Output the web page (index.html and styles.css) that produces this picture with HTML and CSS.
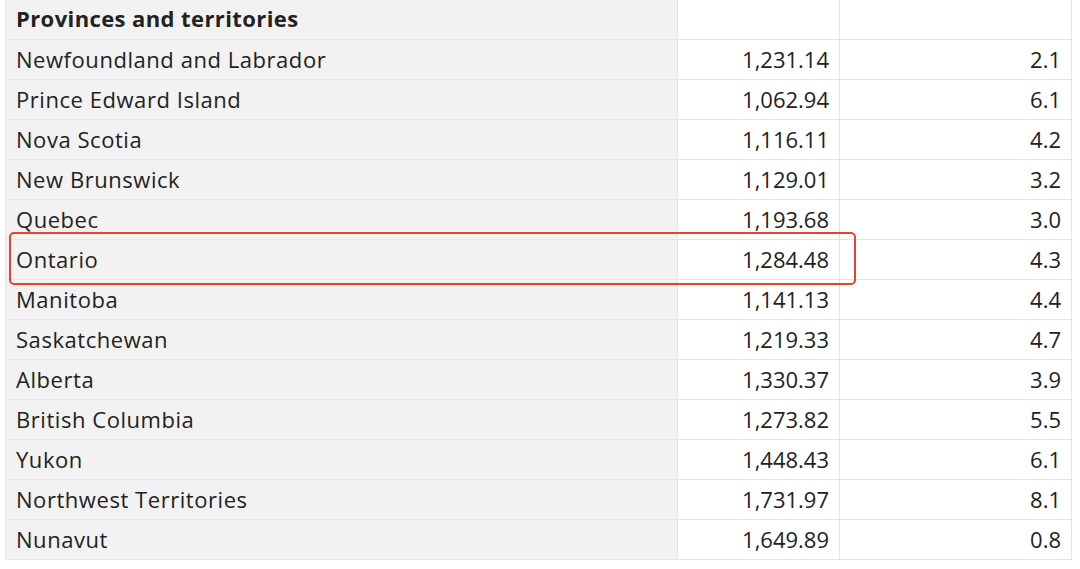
FILE: index.html
```html
<!DOCTYPE html>
<html>
<head>
<meta charset="utf-8">
<link rel="stylesheet" href="styles.css">
</head>
<body>
<div class="wrap">
<table class="data">
  <colgroup><col class="c1"><col class="c2"><col class="c3"></colgroup>
  <tr class="head"><th class="name">Provinces and territories</th><td></td><td></td></tr>
  <tr><th class="name">Newfoundland and Labrador</th><td>1,231.14</td><td>2.1</td></tr>
  <tr><th class="name">Prince Edward Island</th><td>1,062.94</td><td>6.1</td></tr>
  <tr><th class="name">Nova Scotia</th><td>1,116.11</td><td>4.2</td></tr>
  <tr><th class="name">New Brunswick</th><td>1,129.01</td><td>3.2</td></tr>
  <tr><th class="name">Quebec</th><td>1,193.68</td><td>3.0</td></tr>
  <tr><th class="name">Ontario</th><td>1,284.48</td><td>4.3</td></tr>
  <tr><th class="name">Manitoba</th><td>1,141.13</td><td>4.4</td></tr>
  <tr><th class="name">Saskatchewan</th><td>1,219.33</td><td>4.7</td></tr>
  <tr><th class="name">Alberta</th><td>1,330.37</td><td>3.9</td></tr>
  <tr><th class="name">British Columbia</th><td>1,273.82</td><td>5.5</td></tr>
  <tr><th class="name">Yukon</th><td>1,448.43</td><td>6.1</td></tr>
  <tr><th class="name">Northwest Territories</th><td>1,731.97</td><td>8.1</td></tr>
  <tr><th class="name">Nunavut</th><td>1,649.89</td><td>0.8</td></tr>
</table>
<div class="highlight"></div>
</div>
</body>
</html>
```
FILE: styles.css
```css
html, body {
  margin: 0;
  padding: 0;
  background: #ffffff;
}
body {
  font-family: "Open Sans", "Noto Sans", sans-serif;
  color: #222222;
}
.wrap {
  position: relative;
  padding-left: 5px;
  width: 1066px;
}
.data {
  border-collapse: collapse;
  table-layout: fixed;
  width: 1066px;
  font-size: 22px;
}
.c1 { width: 672px; }
.c2 { width: 162px; }
.c3 { width: 232px; }
.data th,
.data td {
  border: 1px solid #e4e4e4;
  height: 40px;
  padding: 0 10px;
  box-sizing: border-box;
  line-height: 26px;
  vertical-align: middle;
}
.data tr.head th,
.data tr.head td {
  border-top: none;
  height: 39px;
  padding-bottom: 3px;
}
.data th.name {
  background: #f2f2f2;
  text-align: left;
  font-weight: 400;
  letter-spacing: 0.55px;
}
.data tr.head th.name {
  font-weight: 700;
  letter-spacing: 0.4px;
}
.data td {
  text-align: right;
  background: #ffffff;
}
.highlight {
  position: absolute;
  left: 9px;
  top: 232px;
  width: 847px;
  height: 53px;
  border: 2px solid #e8412f;
  border-radius: 5px;
  box-sizing: border-box;
  pointer-events: none;
}
```
